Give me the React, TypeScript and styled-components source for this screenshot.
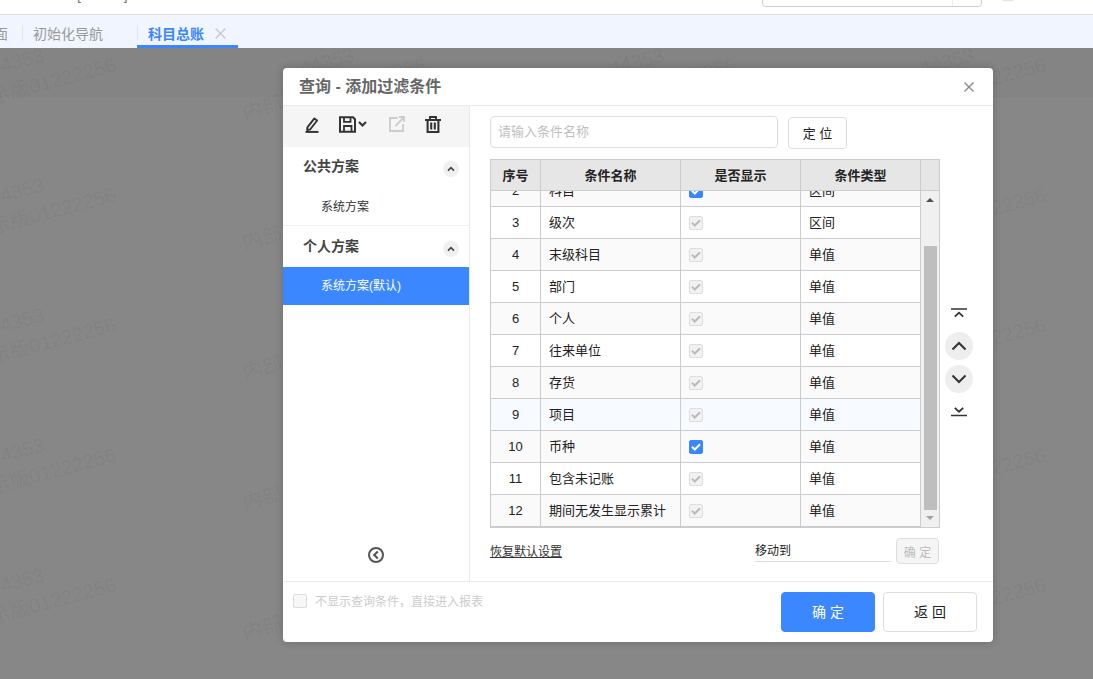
import React from 'react'
import styled, { createGlobalStyle } from 'styled-components'

const FONT = `"Liberation Sans", "Noto Sans CJK SC", sans-serif`

const rows = [
  { no: 2, name: '科目', type: '区间', active: true },
  { no: 3, name: '级次', type: '区间' },
  { no: 4, name: '末级科目', type: '单值' },
  { no: 5, name: '部门', type: '单值' },
  { no: 6, name: '个人', type: '单值' },
  { no: 7, name: '往来单位', type: '单值' },
  { no: 8, name: '存货', type: '单值' },
  { no: 9, name: '项目', type: '单值', hover: true },
  { no: 10, name: '币种', type: '单值', active: true },
  { no: 11, name: '包含未记账', type: '单值' },
  { no: 12, name: '期间无发生显示累计', type: '单值' },
]

/*---> Icons <---*/
const PencilIcon = () => (
  <svg width="16" height="17" viewBox="0 0 16 17" fill="none" stroke="#333" strokeWidth="1.9">
    <path d="M3.4 11.4 10.4 2.4l2.7 2.1-7 9-3 .5z" strokeLinejoin="round" />
    <path d="M1.5 15.9h13" strokeWidth="2" />
  </svg>
)

const SaveIcon = () => (
  <svg width="29" height="17" viewBox="0 0 29 17" fill="none" stroke="#333" strokeWidth="2">
    <path d="M1 1.2h13l2 2v12.6H1z" />
    <path d="M5 1.2v4.6h6.5V1.2M5 15.8V10h7.5v5.8" strokeWidth="1.8" />
    <path d="m20 6 3.5 3.5L27 6" strokeWidth="2.1" />
  </svg>
)

const ShareIcon = () => (
  <svg width="16" height="16" viewBox="0 0 16 16" fill="none" stroke="#ccc" strokeWidth="1.8">
    <path d="M8.5 2H1v13h13V8" />
    <path d="M6.5 10 15 1.2M10 1h5v5" />
  </svg>
)

const TrashIcon = () => (
  <svg width="16" height="17" viewBox="0 0 16 17" fill="none" stroke="#333" strokeWidth="2.1">
    <path d="M0 4h16M5 4V1h6v3" strokeWidth="1.9" />
    <path d="M2.6 4v12h10.8V4M6.2 6.5v7M9.8 6.5v7" />
  </svg>
)

const CollapseIcon = () => (
  <svg width="16" height="16" viewBox="0 0 16 16" fill="none" stroke="#555" strokeWidth="2">
    <circle cx="8" cy="8" r="7" />
    <path d="M9.8 4.4 6.2 8l3.6 3.6" strokeWidth="2.1" />
  </svg>
)

const SmallChevron = () => (
  <svg width="8" height="6" viewBox="0 0 8 6" fill="none" stroke="#444" strokeWidth="1.6">
    <path d="M1 4.6 4 1.6l3 3" />
  </svg>
)

const CheckMark = ({ color }: { color: string }) => (
  <svg width="10" height="8" viewBox="0 0 10 8" fill="none" stroke={color} strokeWidth="2">
    <path d="m1 3.8 2.8 2.7L9 1.2" />
  </svg>
)

const CloseIcon = ({ size, color, weight }: { size: number; color: string; weight: number }) => (
  <svg width={size} height={size} viewBox="0 0 10 10" fill="none" stroke={color} strokeWidth={weight}>
    <path d="m.5.5 9 9M9.5.5l-9 9" />
  </svg>
)

const MoveTopIcon = () => (
  <svg width="16" height="10" viewBox="0 0 16 10" fill="none" stroke="#333" strokeWidth="1.5">
    <path d="M0 1h16" />
    <path d="m3.8 8.6 4.2-3.9 4.2 3.9" strokeWidth="1.8" />
  </svg>
)

const MoveBottomIcon = () => (
  <svg width="16" height="10" viewBox="0 0 16 10" fill="none" stroke="#333" strokeWidth="1.5">
    <path d="M0 8.5h16" />
    <path d="m3.8.8 4.2 3.9 4.2-3.9" strokeWidth="1.8" />
  </svg>
)

const ChevronUp = () => (
  <svg width="16" height="10" viewBox="0 0 16 10" fill="none" stroke="#333" strokeWidth="2">
    <path d="m1.5 8.5 6.5-6.5 6.5 6.5" />
  </svg>
)

const ChevronDown = () => (
  <svg width="16" height="10" viewBox="0 0 16 10" fill="none" stroke="#333" strokeWidth="2">
    <path d="m1.5 1.5 6.5 6.5 6.5-6.5" />
  </svg>
)

/*---> Component <---*/
export default function App() {
  return (
    <Page>
      <GlobalStyle />
      <TopBar>
        <TopLabel>[ &nbsp; &nbsp; &nbsp; &nbsp; &nbsp; ]</TopLabel>
        <TopSearch />
        <TopMark />
      </TopBar>
      <TabBar>
        <TabText $clip>首页面</TabText>
        <TabDivider />
        <TabText>初始化导航</TabText>
        <ActiveTab>
          <ActiveTabText>科目总账</ActiveTabText>
          <CloseIcon size={11} color="#c8c8c8" weight={1.2} />
        </ActiveTab>
      </TabBar>

      <Backdrop>
        <BackdropStrip />
        <WatermarkLayer>
          {Array.from({ length: 28 }).map((_, i) => (
            <WatermarkTile key={i}>
              <WatermarkText>
                44353
                <br />
                内部演示版01222256
              </WatermarkText>
            </WatermarkTile>
          ))}
        </WatermarkLayer>

        <Modal>
          <ModalHeader>
            <ModalTitle>查询 - 添加过滤条件</ModalTitle>
            <CloseIcon size={10} color="#888" weight={1.4} />
          </ModalHeader>

          <ModalBody>
            <Side>
              <SideToolbar>
                <PencilIcon />
                <SaveIcon />
                <ShareIcon />
                <TrashIcon />
              </SideToolbar>

              <GroupHeader>
                公共方案
                <GroupToggle><SmallChevron /></GroupToggle>
              </GroupHeader>
              <SchemeItem>系统方案</SchemeItem>
              <GroupHeader $tall $divided>
                个人方案
                <GroupToggle><SmallChevron /></GroupToggle>
              </GroupHeader>
              <SchemeItem $active>系统方案(默认)</SchemeItem>

              <CollapseWrap><CollapseIcon /></CollapseWrap>
            </Side>

            <Main>
              <SearchRow>
                <SearchInput placeholder="请输入条件名称" />
                <LocateButton>定 位</LocateButton>
              </SearchRow>

              <TableRow>
                <TableFrame>
                  <TableHead>
                    <HeadCell>序号</HeadCell>
                    <HeadCell>条件名称</HeadCell>
                    <HeadCell>是否显示</HeadCell>
                    <HeadCell>条件类型</HeadCell>
                    <HeadFiller />
                  </TableHead>
                  <TableContent>
                    <RowsViewport>
                      {rows.map((row, i) => (
                        <DataRow key={row.no} $even={i % 2 === 0} $hover={row.hover}>
                          <NoCell>{row.no}</NoCell>
                          <TextCell>{row.name}</TextCell>
                          <CheckCell>
                            <CheckBox $active={row.active}>
                              <CheckMark color={row.active ? '#fff' : '#bbb'} />
                            </CheckBox>
                          </CheckCell>
                          <TextCell>{row.type}</TextCell>
                        </DataRow>
                      ))}
                    </RowsViewport>
                    <ScrollTrack>
                      <ArrowUp />
                      <ScrollThumb />
                      <ArrowDown />
                    </ScrollTrack>
                  </TableContent>
                </TableFrame>

                <MoveColumn>
                  <MoveTopWrap><MoveTopIcon /></MoveTopWrap>
                  <MoveCircle><ChevronUp /></MoveCircle>
                  <MoveCircle><ChevronDown /></MoveCircle>
                  <MoveBottomWrap><MoveBottomIcon /></MoveBottomWrap>
                </MoveColumn>
              </TableRow>

              <ActionRow>
                <ResetLink>恢复默认设置</ResetLink>
                <MoveGroup>
                  <MoveField>移动到</MoveField>
                  <MoveConfirm>确 定</MoveConfirm>
                </MoveGroup>
              </ActionRow>
            </Main>
          </ModalBody>

          <ModalFooter>
            <SkipOption>
              <SkipBox />
              <SkipLabel>不显示查询条件，直接进入报表</SkipLabel>
            </SkipOption>
            <FooterButtons>
              <FooterButton $primary>确 定</FooterButton>
              <FooterButton>返 回</FooterButton>
            </FooterButtons>
          </ModalFooter>
        </Modal>
      </Backdrop>
    </Page>
  )
}

/*---> Styles <---*/
const GlobalStyle = createGlobalStyle`
  html, body {
    margin: 0;
    padding: 0;
    overflow: hidden;
  }
  * {
    box-sizing: border-box;
  }
`

const Page = styled.div`
  display: flex;
  flex-direction: column;
  width: 1093px;
  height: 679px;
  overflow: hidden;
  font-family: ${FONT};
  font-size: 13px;
  color: #222;
`

const TopBar = styled.div`
  display: flex;
  align-items: flex-end;
  flex: none;
  height: 15px;
  padding: 0 79px 7px 77px;
  background: #fff;
  border-bottom: 1px solid #ddd;
  overflow: hidden;
`

const TopLabel = styled.span`
  font-size: 14px;
  line-height: 16px;
  margin-bottom: 4px;
  color: #777;
`

const TopSearch = styled.div`
  width: 220px;
  height: 20px;
  margin-left: auto;
  border: 1px solid #ccc;
  border-radius: 4px;
  background: linear-gradient(to right, #fff 189px, #eee 189px, #eee 190px, #fff 190px);
`

const TopMark = styled.div`
  align-self: flex-start;
  width: 12px;
  height: 1px;
  margin-left: 20px;
  background: #e5e5e5;
`

const TabBar = styled.div`
  display: flex;
  align-items: stretch;
  flex: none;
  height: 33px;
  background: #f0f5ff;
`

const TabText = styled.span<{ $clip?: boolean }>`
  align-self: center;
  font-size: 14px;
  color: #999;
  margin-left: ${(p) => (p.$clip ? '-34px' : '0')};
  margin-right: ${(p) => (p.$clip ? '14px' : '34px')};
  margin-top: 3px;
`

const TabDivider = styled.span`
  align-self: center;
  width: 1px;
  height: 16px;
  margin: 3px 10px 0 0;
  background: #e0e4ec;
`

const ActiveTab = styled.div`
  position: relative;
  display: flex;
  align-items: center;
  gap: 11px;
  width: 101px;
  padding: 6px 0 0 11px;
  border-bottom: 3px solid #3a87ff;

  &::before {
    content: '';
    position: absolute;
    top: 10px;
    left: 0;
    width: 1px;
    height: 16px;
    background: #e0e4ec;
  }
`

const ActiveTabText = styled.span`
  font-size: 14px;
  font-weight: 700;
  color: #3a87ff;
`

const Backdrop = styled.div`
  position: relative;
  flex: 1;
  padding: 20px 0 0 283px;
  background: #878787;
  overflow: hidden;
`

const BackdropStrip = styled.div`
  position: absolute;
  top: 0;
  left: 0;
  right: 0;
  height: 49px;
  background: #848484;
`

const WatermarkLayer = styled.div`
  position: absolute;
  top: -38px;
  left: -135px;
  display: grid;
  grid-template-columns: repeat(5, 310px);
  grid-auto-rows: 130px;
`

const WatermarkTile = styled.div`
  display: flex;
  align-items: center;
  justify-content: center;
`

const WatermarkText = styled.div`
  flex: none;
  transform: rotate(-15deg);
  font-size: 20px;
  line-height: 28px;
  text-align: center;
  white-space: nowrap;
  color: rgba(0, 0, 0, 0.05);
`

const Modal = styled.div`
  position: relative;
  display: flex;
  flex-direction: column;
  width: 710px;
  height: 574px;
  background: #fff;
  border-radius: 4px;
  box-shadow: 0 0 8px rgba(0, 0, 0, 0.2);
`

const ModalHeader = styled.div`
  display: flex;
  align-items: center;
  justify-content: space-between;
  flex: none;
  height: 38px;
  padding: 0 19px 0 16px;
  border-bottom: 1px solid #eaeaea;
`

const ModalTitle = styled.div`
  margin-top: -4px;
  font-size: 16px;
  font-weight: 700;
  color: #666;
`

const ModalBody = styled.div`
  display: flex;
  flex: 1;
  min-height: 0;
`

const Side = styled.div`
  display: flex;
  flex-direction: column;
  flex: none;
  width: 187px;
  border-right: 1px solid #eaeaea;
`

const SideToolbar = styled.div`
  display: grid;
  grid-template-columns: 35px 50px 36px 16px;
  align-items: center;
  flex: none;
  height: 41px;
  padding: 0 0 5px 21px;
  background: #f5f5f5;
`

const GroupHeader = styled.div<{ $tall?: boolean; $divided?: boolean }>`
  display: flex;
  align-items: center;
  justify-content: space-between;
  flex: none;
  height: ${(p) => (p.$tall ? '42px' : '39px')};
  padding: 0 10px 4px 20px;
  font-size: 14px;
  font-weight: 700;
  color: #444;
  border-top: ${(p) => (p.$divided ? '1px solid #eee' : '0')};
`

const GroupToggle = styled.span`
  display: flex;
  align-items: center;
  justify-content: center;
  width: 16px;
  height: 16px;
  margin-top: 8px;
  border-radius: 50%;
  background: #f0f0f0;
`

const SchemeItem = styled.div<{ $active?: boolean }>`
  display: flex;
  align-items: center;
  flex: none;
  height: ${(p) => (p.$active ? '38px' : '39px')};
  padding: 0 0 ${(p) => (p.$active ? '3px' : '1px')} 38px;
  font-size: 12px;
  color: ${(p) => (p.$active ? '#fff' : '#333')};
  background: ${(p) => (p.$active ? '#3a87ff' : 'transparent')};
`

const CollapseWrap = styled.div`
  display: flex;
  justify-content: center;
  margin-top: auto;
  padding-bottom: 18px;
`

const Main = styled.div`
  display: flex;
  flex-direction: column;
  flex: 1;
  padding: 10px 0 0 20px;
`

const SearchRow = styled.div`
  display: flex;
  gap: 10px;
  height: 33px;
  margin-bottom: 10px;
`

const SearchInput = styled.input`
  width: 288px;
  height: 32px;
  padding: 0 7px 2px;
  border: 1px solid #ddd;
  border-radius: 4px;
  outline: none;
  font-family: ${FONT};
  font-size: 13px;

  &::placeholder {
    color: #c0c0c0;
    opacity: 1;
  }
`

const LocateButton = styled.button`
  width: 59px;
  height: 32px;
  margin-top: 1px;
  padding: 0 0 2px;
  border: 1px solid #ddd;
  border-radius: 4px;
  background: #fff;
  font-family: ${FONT};
  font-size: 13px;
  color: #222;
`

const TableRow = styled.div`
  display: flex;
`

const TableFrame = styled.div`
  display: flex;
  flex-direction: column;
  flex: none;
  width: 450px;
  height: 369px;
  border: 1px solid #ccc;
`

const TableHead = styled.div`
  display: grid;
  grid-template-columns: 50px 140px 120px 120px 1fr;
  flex: none;
  height: 31px;
  background: #e6e6e6;
  border-bottom: 1px solid #ccc;
`

const HeadCell = styled.div`
  display: flex;
  align-items: center;
  justify-content: center;
  padding-bottom: 2px;
  font-weight: 700;
  color: #222;
  border-right: 1px solid #ccc;
`

const HeadFiller = styled.div``

const TableContent = styled.div`
  display: flex;
  flex: 1;
  min-height: 0;
`

const RowsViewport = styled.div`
  display: flex;
  flex-direction: column;
  justify-content: flex-end;
  flex: none;
  width: 430px;
  overflow: hidden;
`

const DataRow = styled.div<{ $even: boolean; $hover?: boolean }>`
  display: grid;
  grid-template-columns: 50px 140px 120px 120px;
  flex: none;
  height: 32px;
  border-bottom: 1px solid #ccc;
  background: ${(p) => (p.$hover ? '#f7fbff' : p.$even ? '#fafafa' : '#fff')};
`

const NoCell = styled.div`
  display: flex;
  align-items: center;
  justify-content: center;
  border-right: 1px solid #ccc;
  color: #222;
`

const TextCell = styled.div`
  display: flex;
  align-items: center;
  padding: 0 0 3px 8px;
  border-right: 1px solid #ccc;
  color: #222;
`

const CheckCell = styled.div`
  display: flex;
  align-items: center;
  padding-left: 8px;
  border-right: 1px solid #ccc;
`

const CheckBox = styled.span<{ $active?: boolean }>`
  display: flex;
  align-items: center;
  justify-content: center;
  width: 14px;
  height: 14px;
  border: 1px solid ${(p) => (p.$active ? '#3a87ff' : '#ddd')};
  border-radius: 2px;
  background: ${(p) => (p.$active ? '#3a87ff' : '#f2f2f2')};
`

const ScrollTrack = styled.div`
  display: flex;
  flex-direction: column;
  align-items: center;
  flex: 1;
  background: #f0f0f0;
`

const ArrowUp = styled.span`
  width: 0;
  height: 0;
  margin-top: 7px;
  border-left: 4px solid transparent;
  border-right: 4px solid transparent;
  border-bottom: 4px solid #505050;
`

const ScrollThumb = styled.div`
  width: 13px;
  height: 264px;
  margin-top: 44px;
  background: #bebebe;
`

const ArrowDown = styled.span`
  width: 0;
  height: 0;
  margin-top: 6px;
  border-left: 4px solid transparent;
  border-right: 4px solid transparent;
  border-top: 4px solid #a3a3a3;
`

const MoveColumn = styled.div`
  display: flex;
  flex-direction: column;
  align-items: center;
  gap: 5px;
  flex: none;
  width: 38px;
  padding-top: 149px;
`

const MoveTopWrap = styled.span`
  display: flex;
  height: 10px;
  margin-bottom: 9px;
`

const MoveBottomWrap = styled.span`
  display: flex;
  height: 10px;
  margin-top: 9px;
`

const MoveCircle = styled.span`
  display: flex;
  align-items: center;
  justify-content: center;
  flex: none;
  width: 28px;
  height: 28px;
  border-radius: 50%;
  background: #eee;
`

const ActionRow = styled.div`
  display: flex;
  align-items: center;
  justify-content: space-between;
  width: 449px;
  height: 26px;
  margin-top: 10px;
`

const ResetLink = styled.span`
  margin-top: -2px;
  font-size: 12px;
  color: #333;
  text-decoration: underline;
`

const MoveGroup = styled.div`
  display: flex;
  align-items: center;
  gap: 5px;
`

const MoveField = styled.div`
  width: 136px;
  height: 22px;
  margin-bottom: 1px;
  font-size: 12px;
  line-height: 23px;
  color: #222;
  border-bottom: 1px solid #ddd;
`

const MoveConfirm = styled.div`
  display: flex;
  align-items: center;
  justify-content: center;
  width: 43px;
  height: 26px;
  font-size: 12px;
  color: #bbb;
  background: #f5f5f5;
  border: 1px solid #ddd;
  border-radius: 4px;
`

const ModalFooter = styled.div`
  display: flex;
  justify-content: space-between;
  flex: none;
  height: 61px;
  padding: 10px 16px 0 10px;
  border-top: 1px solid #eaeaea;
`

const SkipOption = styled.div`
  display: flex;
  align-items: center;
  gap: 8px;
  height: 14px;
  margin-top: 2px;
  font-size: 12px;
  color: #ccc;
`

const SkipLabel = styled.span`
  margin-top: -2px;
`

const SkipBox = styled.span`
  flex: none;
  width: 14px;
  height: 14px;
  border: 1px solid #ddd;
  border-radius: 2px;
  background: #f7f7f7;
`

const FooterButtons = styled.div`
  display: flex;
  gap: 8px;
`

const FooterButton = styled.button<{ $primary?: boolean }>`
  width: 94px;
  height: 40px;
  padding: 0 0 3px;
  border: 1px solid ${(p) => (p.$primary ? '#3a87ff' : '#ddd')};
  border-radius: 4px;
  background: ${(p) => (p.$primary ? '#3a87ff' : '#fff')};
  font-family: ${FONT};
  font-size: 14px;
  color: ${(p) => (p.$primary ? '#fff' : '#222')};
`
